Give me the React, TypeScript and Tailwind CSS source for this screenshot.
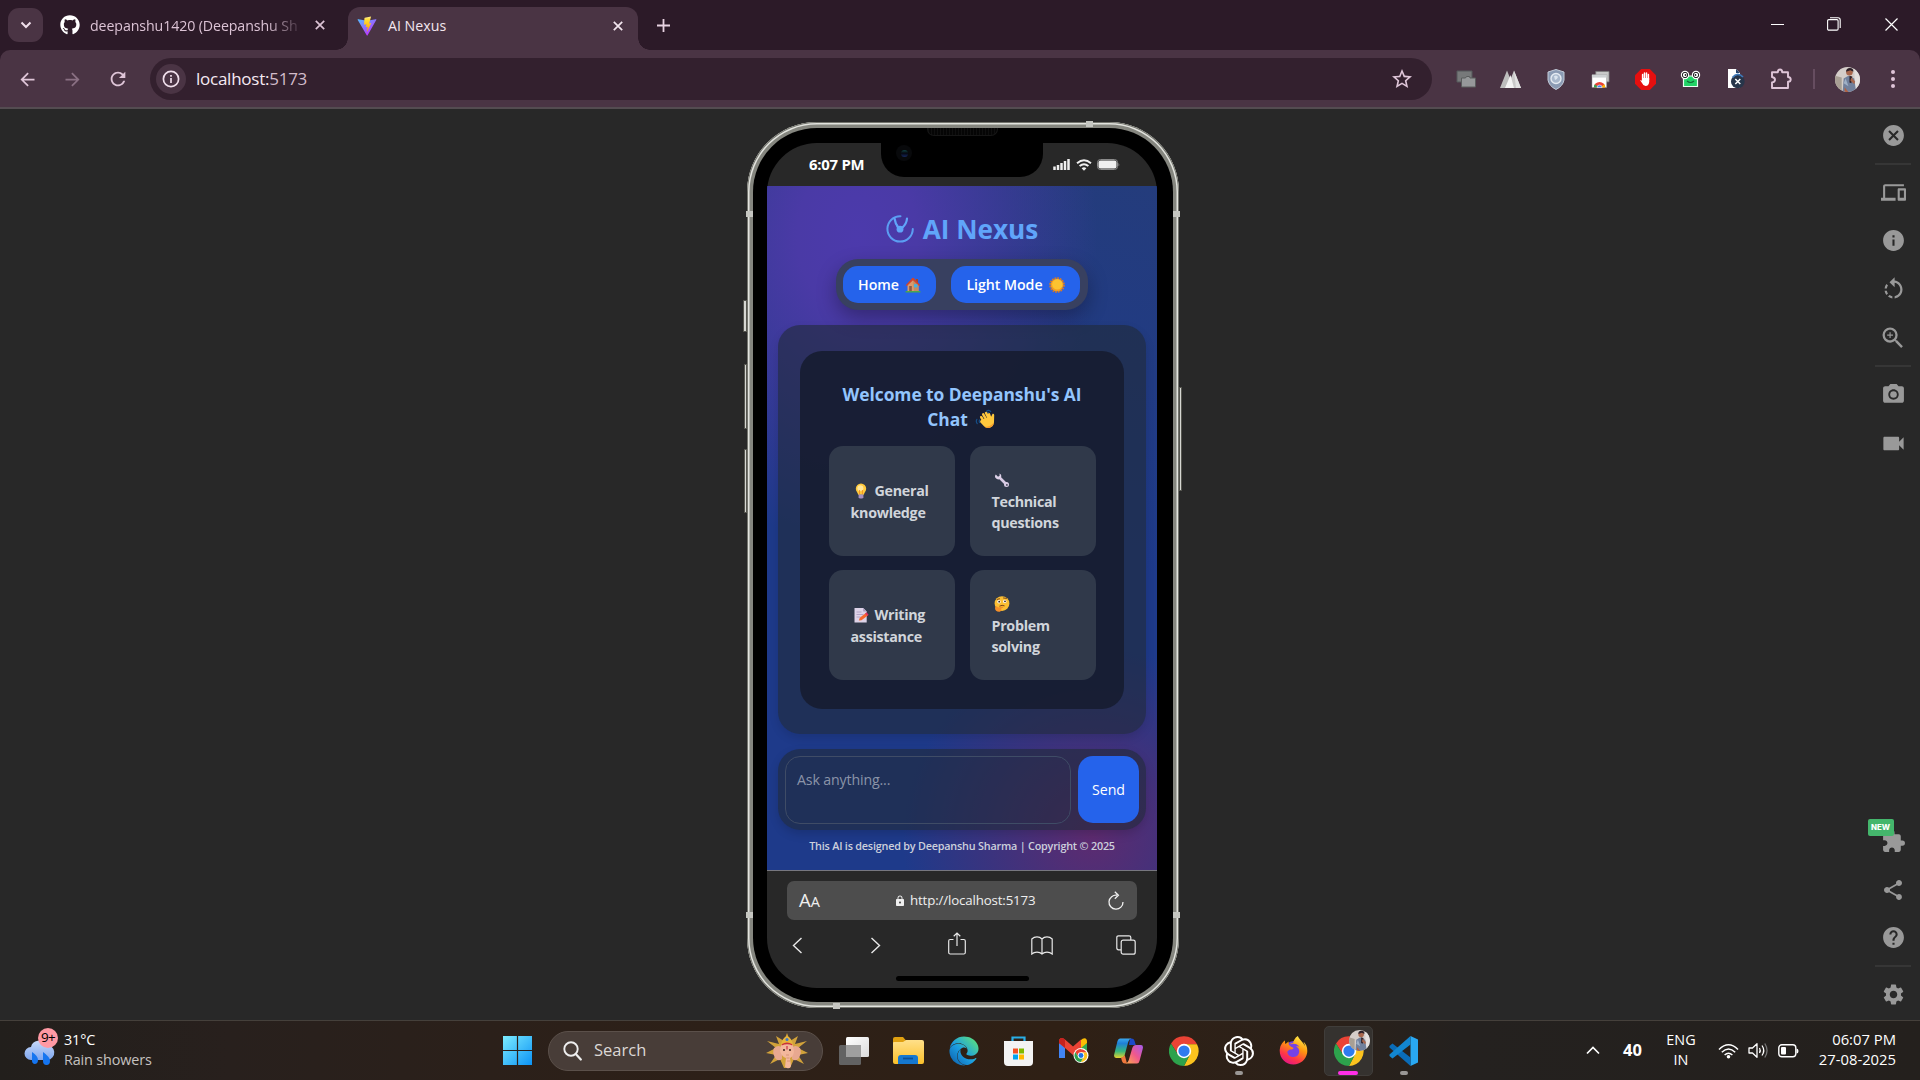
import React from "react";
import { FaGithub, FaEdge, FaFirefoxBrowser } from "react-icons/fa";
import { SiOpenai } from "react-icons/si";
import {
  MdCancel, MdDevices, MdInfo, MdRotateLeft, MdZoomIn, MdCameraAlt, MdVideocam,
  MdExtension, MdShare, MdHelp, MdSettings, MdStarBorder, MdRefresh, MdArrowBack, MdArrowForward, MdLock,
} from "react-icons/md";

type Kids = { children?: React.ReactNode };

const Svg = ({ w, h = w, vb, children, className = "" }: Kids & { w: number; h?: number; vb: string; className?: string }) => (
  <svg width={w} height={h} viewBox={vb} fill="none" className={"shrink-0 " + className}>{children}</svg>
);

/* ---------- Emoji drawings ---------- */
const House = () => (
  <Svg w={16} vb="0 0 16 16">
    <rect x="0.5" y="14" width="15" height="1.6" rx=".6" fill="#4ca64c" />
    <rect x="11" y="2" width="2" height="4" fill="#a5482c" />
    <path d="M2.5 7.5 8 2.2l5.5 5.3V14h-11z" fill="#d99a6c" />
    <path d="M8 2.2 13.5 7.5V14H9z" fill="#c58b62" />
    <path d="M.7 8.2 7.3 1q.7-.6 1.4 0l6.6 7.2-1.2.9L8 3.2 1.9 9.1z" fill="#d2452c" />
    <rect x="9" y="7.2" width="3.4" height="3.2" fill="#3fb4e8" />
    <rect x="4.2" y="9" width="2.6" height="5" fill="#8e5a44" />
  </Svg>
);
const Sun = () => (
  <Svg w={16} vb="0 0 16 16">
    <circle cx="8" cy="8" r="7" stroke="#e07a1d" strokeWidth="1.6" strokeDasharray="1.8 .95" />
    <circle cx="8" cy="8" r="6.3" fill="#f59e1e" />
    <circle cx="8.3" cy="7.4" r="5.2" fill="#fcc330" />
  </Svg>
);
const Wave = () => (
  <Svg w={20} vb="0 0 20 20">
    <path d="M11.5 2.2q2.3-1.6 4.2.4M1.8 10.4q-1.2 2.4.4 4.2M4.6 11q-.8 1.2 0 2.4M12 4l1.6-.3" stroke="#17508a" strokeWidth="1.2" strokeLinecap="round" />
    <path d="M6.2 8.2 9.6 14M8.2 5.4l3.6 6.2M11 4l3 6M14 5.4l1.6 4.8" stroke="#ffc83d" strokeWidth="2.5" strokeLinecap="round" />
    <path d="M7 10.6 16 8l1.6-3.2q1.4-.4 1.6 1.2l-.2 7.6q-.6 4.2-4.4 5.2-3.6.8-5.6-1.6L5 13q0-1.6 2-2.4z" fill="#ffc83d" />
    <path d="M9 17.2q5 1.6 8-1.6l1.8-2q-.6 4.2-4.2 5.2-3.4.8-5.6-1.6z" fill="#f79a2b" />
  </Svg>
);
const Bulb = () => (
  <Svg w={16} vb="0 0 16 16">
    <path d="M8 .6a5.2 5.2 0 0 1 5.2 5.2c0 2.6-2 3.6-2.4 6H5.2C4.800 9.400 2.800 8.400 2.800 5.800A5.200 5.200 0 0 1 8 .6z" fill="#ffc93c" />
    <circle cx="7.4" cy="5.200" r="3" fill="#ffe79a" />
    <path d="M6.600 7v4M9.400 7v4" stroke="#f08c1e" strokeWidth=".9" />
    <path d="M5.600 11.600h4.800v2.600L9.400 15.400H6.600l-1-1.200z" fill="#a58fc0" />
  </Svg>
);
const Wrench = () => (
  <Svg w={16} vb="0 0 16 16">
    <path d="m4.500 4.500 7.500 7.500" stroke="#d8cbe4" strokeWidth="2.600" />
    <path d="M1.800 2.400A3 3 0 1 0 5.400 1.500L5.800 3.900 4.300 5z" fill="#ddd1e8" />
    <circle cx="12.500" cy="12.500" r="2.500" fill="#d8cbe4" />
    <circle cx="12.900" cy="12.900" r=".9" fill="#3b3f52" />
  </Svg>
);
const Memo = () => (
  <Svg w={16} vb="0 0 16 16">
    <path d="M1.500 1h8.700l3.500 3.500V15.500H1.500z" fill="#ddd3e8" />
    <path d="M10.200 1l3.500 3.500h-3.500z" fill="#a99bc0" />
    <path d="M3.500 5h5M3.500 7.500h7M3.500 10h4" stroke="#b3a4c6" />
    <path d="m5.800 13.600 1-2.900 5.700-4.500 2.300 2.400-6.300 4.700z" fill="#f7682d" />
    <path d="m12 6.500 1.500-1.200 2.100 2.400-1.400 1.300z" fill="#e0325e" />
  </Svg>
);
const Thinking = () => (
  <Svg w={16} vb="0 0 16 16">
    <circle cx="8" cy="7.600" r="7.400" fill="#fcbf33" />
    <circle cx="5" cy="5.800" r="1.700" fill="#fff" /><circle cx="10.800" cy="5.400" r="1.700" fill="#fff" />
    <circle cx="5.200" cy="5.700" r=".9" fill="#35241b" /><circle cx="11" cy="5.300" r=".9" fill="#35241b" />
    <path d="M3.200 3.400 5.500 2.800M9.500 2l3 .4M5.800 10q2.400-1.400 4.400-.3" stroke="#6b3a17" strokeWidth=".9" strokeLinecap="round" />
    <path d="M1 12q.2-2 1.800-1.600l1.600 1.200 4-1.200q1.200.2.800 1.200L7 12.800q1 2.400-1.200 3Q1.200 16.200 1 12z" fill="#f5902a" />
  </Svg>
);

/* ---------- Brand drawings ---------- */
const Chrome = ({ size = 30 }: { size?: number }) => (
  <Svg w={size} vb="0 0 48 48">
    <path d="M24 13h20.800A24 24 0 0 0 3.200 12l11.300 17.500z" fill="#ea4335" />
    <path d="M33.500 29.500 24 48A24 24 0 0 0 44.800 13H24z" fill="#fcc31e" />
    <path d="M14.500 29.500 3.200 12A24 24 0 0 0 24 48l9.500-18.500z" fill="#2da24c" />
    <circle cx="24" cy="24" r="11.500" fill="#fff" />
    <circle cx="24" cy="24" r="9" fill="#2f7bee" />
  </Svg>
);
const Vite = () => (
  <Svg w={20} vb="0 0 32 32">
    <defs>
      <linearGradient id="vt" x1="0" y1="0" x2="20" y2="30" gradientUnits="userSpaceOnUse"><stop stopColor="#41d1ff" /><stop offset="1" stopColor="#bd34fe" /></linearGradient>
      <linearGradient id="vb" x1="16" y1="2" x2="18" y2="22" gradientUnits="userSpaceOnUse"><stop stopColor="#ffea83" /><stop offset=".2" stopColor="#ffdd35" /><stop offset="1" stopColor="#ffa800" /></linearGradient>
    </defs>
    <path d="M30.800 6.200 17 30.800q-.7 1.200-1.500 0L1.200 6.200q-.6-1.500 1-1.200l13.800 2.400L30 5q1.400-.2.800 1.200z" fill="url(#vt)" />
    <path d="M22.600 .8 12.400 2.800l-.5.600-.6 10.400 3.800-.7-1 5 3.200-.8-1.600 7.200q.1.700.6.200l6.500-13.400-3.400.6z" fill="url(#vb)" />
  </Svg>
);
const Avatar = ({ size }: { size: number }) => (
  <svg width={size} height={size} viewBox="0 0 26 26" className="shrink-0 rounded-full">
    <rect width="26" height="26" fill="#d4cdc9" />
    <path d="M0 9l7 2v15H0z" fill="#a89f94" />
    <path d="M20 0h6v26h-5z" fill="#e4e0df" />
    <path d="M9 12l5-3 6 3 2 14H8z" fill="#71809c" />
    <path d="M11 12l3 8-5-3z" fill="#9fb0c6" />
    <circle cx="15" cy="5.500" r="3.400" fill="#a8674d" />
    <path d="M11.500 5q0-4 4-4t3.500 4l-3-1.500z" fill="#2c2028" />
    <path d="M15 9l3 1-1 7-2-1z" fill="#33242b" />
    <path d="M17 11l4 4-1 3-4-4z" fill="#a8674d" />
    <path d="M10 21l4 5h-4z" fill="#b5603f" />
  </svg>
);

/* ---------- Browser chrome ---------- */
const XIcon = () => (
  <Svg w={10} vb="0 0 10 10"><path d="M.8.800l8.400 8.400M9.200.8.800 9.200" stroke="currentColor" strokeWidth="1.700" /></Svg>
);

function TabStrip() {
  return (
    <div className="flex h-[50px] shrink-0 items-start bg-[#2c1a28] pl-2">
      <div className="mt-2 flex h-[34px] w-[35px] items-center justify-center rounded-[11px] bg-[#4a3444] text-[#f0dfeb]">
        <Svg w={12} h={8} vb="0 0 12 8"><path d="m1.500 1.500 4.500 4.500 4.500-4.500" stroke="currentColor" strokeWidth="2" /></Svg>
      </div>
      <div className="flex h-[50px] w-[305px] items-center pl-[17px] text-[#dcc3d5]">
        <FaGithub size={20} className="text-white" />
        <div className="ml-[10px] mt-px w-[210px] whitespace-nowrap text-[14.200px] tracking-[-0.100px] [mask-image:linear-gradient(90deg,#000_84%,transparent_102%)]">deepanshu1420 (Deepanshu Sh</div>
        <div className="ml-[15px]"><XIcon /></div>
      </div>
      <div className="relative mt-[7px] flex h-[43px] w-[290px] items-center rounded-t-[12px] bg-[#4a3444] pb-[6px] pl-[9px] pr-[15px] text-[#f3e6ef]">
        <div className="absolute -left-3 bottom-0 size-3 bg-[radial-gradient(circle_at_0_0,transparent_11.500px,#4a3444_12px)]" />
        <div className="absolute -right-3 bottom-0 size-3 bg-[radial-gradient(circle_at_100%_0,transparent_11.500px,#4a3444_12px)]" />
        <Vite />
        <span className="ml-[11px] flex-1 text-[14.200px]">AI Nexus</span>
        <XIcon />
      </div>
      <div className="flex h-[50px] flex-1 items-center pl-[19px] text-[#e8d3e2]">
        <Svg w={13} vb="0 0 13 13"><path d="M6.500 0v13M0 6.500h13" stroke="currentColor" strokeWidth="1.800" /></Svg>
      </div>
      <div className="flex h-[48px] items-center pr-[22px] text-white">
        <Svg w={13} vb="0 0 13 13"><path d="M0 6.500h13" stroke="currentColor" /></Svg>
        <Svg w={14} vb="0 0 14 14" className="ml-[43px]"><rect x=".6" y="2.600" width="10.500" height="10.500" rx="1.200" stroke="currentColor" strokeWidth="1.100" /><path d="M3 .7h8q2.200 0 2.200 2.200V11" stroke="currentColor" strokeWidth="1.100" /></Svg>
        <Svg w={13} vb="0 0 13 13" className="ml-[44px]"><path d="m.5.500 12 12m0-12-12 12" stroke="currentColor" strokeWidth="1.200" /></Svg>
      </div>
    </div>
  );
}

const Ext = ({ children }: Kids) => <div className="flex w-[45px] items-center justify-center">{children}</div>;

function Toolbar() {
  return (
    <div className="shrink-0 bg-[#2c1a28]">
      <div className="flex h-[57px] items-center rounded-t-[10px] bg-[#4a3444] pt-px text-[#dfc5d8]">
        <div className="flex w-[150px] items-center pl-[17px]">
          <MdArrowBack size={21} />
          <MdArrowForward size={21} className="ml-6 text-[#8a7083]" />
          <MdRefresh size={22} className="ml-6" />
        </div>
        <div className="flex h-[42px] w-[1282px] items-center rounded-full bg-[#33202e] pl-[6px] pr-[18px]">
          <div className="flex size-[30px] items-center justify-center rounded-full bg-[#4a3444] text-[#f0dfeb]">
            <Svg w={18} vb="0 0 18 18"><circle cx="9" cy="9" r="7.600" stroke="currentColor" strokeWidth="1.700" /><path d="M9 8v5M9 5v1.800" stroke="currentColor" strokeWidth="1.700" /></Svg>
          </div>
          <div className="ml-[10px] flex-1 text-[17px] tracking-[-0.250px] text-[#f6eaf3]">localhost:<span className="text-[#d2bccb]">5173</span></div>
          <MdStarBorder size={24} />
        </div>
        <div className="ml-[11px] flex">
          <Ext><Svg w={20} vb="0 0 20 20"><path d="M1 2h15v11H1z" fill="#77797a" stroke="#55585a" /><path d="M5.500 9h4l1-1.500h3L14 9h5.500v9h-14z" fill="#96989a" stroke="#5a5c5d" /></Svg></Ext>
          <Ext><Svg w={21} h={20} vb="0 0 21 20"><path d="M7 1.500 0 19h14z" fill="#bdbdbd" /><path d="M14 1.500 21 19H7z" fill="#c9c9c9" /><path d="M10.500 6 14 19H5z" fill="#f4f4f4" /><path d="m14 1.500 2 17.500H21z" fill="#e2e2e2" /></Svg></Ext>
          <Ext><Svg w={18} h={21} vb="0 0 18 21"><path d="M9 .5 17 3v8q-1 6-8 9.500Q2 17 1 11V3z" fill="#8b9bb4" stroke="#c3ccd9" /><circle cx="9" cy="9.500" r="5" fill="#a9b8cc" stroke="#e5ebf2" strokeWidth="1.400" /><path d="M7 7q3-1.500 4 1-1 3-3 3" fill="#dbe4ee" /></Svg></Ext>
          <Ext><Svg w={19} h={19} vb="0 0 20 20"><path d="M5 1.500h14v11H5z" fill="#c8c8c8" stroke="#777" strokeWidth=".8" /><path d="M1 5h15.500v13.500H1z" fill="#fff" stroke="#777" strokeWidth=".5" /><path d="M1 5h15.500v3H1z" fill="#cfd2d4" /><path d="M3 18.500a6 6 0 0 1 12 0z" fill="#ea4335" /><path d="M3 18.500q0-2 1-3.500l4 3.500z" fill="#34a853" /><path d="M15 18.500q0-2-1-3.500l-4 3.500z" fill="#fbbc04" /><path d="M6.300 18.500a2.700 2.700 0 0 1 5.400 0z" fill="#4285f4" stroke="#fff" strokeWidth=".6" /></Svg></Ext>
          <Ext><Svg w={21} vb="0 0 21 21"><path d="M6.200 0h8.600L21 6.200v8.600L14.800 21H6.200L0 14.800V6.200z" fill="#e60f0f" /><path d="M7.600 11V5.500M9.500 10V4M11.500 10V4M13.400 11V5.500" stroke="#fff" strokeWidth="1.500" strokeLinecap="round" /><path d="M7 9h7.200v4q-.5 4-3.600 4-2.400 0-3.600-3L5.300 11.500q.5-1.200 1.700.5z" fill="#fff" /></Svg></Ext>
          <Ext><Svg w={21} h={20} vb="0 0 21 20"><path d="M3.500 7h14v10.500h-14z" fill="#21d366" stroke="#e9fff2" strokeWidth="1.200" /><circle cx="5" cy="6" r="4.200" fill="#fff" /><circle cx="16" cy="6" r="4.200" fill="#fff" /><circle cx="5" cy="6" r="2.700" stroke="#222" fill="#fff" /><circle cx="16" cy="6" r="2.700" stroke="#222" fill="#fff" /><circle cx="5.500" cy="6" r=".9" fill="#222" /><circle cx="15.500" cy="6" r=".9" fill="#222" /><path d="M7 12q3.500 3 7 0" stroke="#126b37" strokeWidth="1.200" /></Svg></Ext>
          <Ext><Svg w={19} h={20} vb="0 0 19 20"><path d="M2 0h8l4 4v15H2z" fill="#fff" /><path d="M10 0l4 4h-4z" fill="#25446d" /><circle cx="11.800" cy="12.500" r="6.800" fill="#27354a" /><path d="M6.500 8.500q5-6 10.500-.5" stroke="#3f78b8" strokeWidth="1.700" /><path d="m9.300 10 5 5m0-5-5 5" stroke="#fff" strokeWidth="1.500" /></Svg></Ext>
          <Ext><Svg w={22} h={22} vb="0 0 22 22"><path d="M2 4.200h5.800q0-2.700 2.200-2.700t2.200 2.700H18V9q2.700.2 2.700 2.400T18 13.800v6.200H2v-5.600q3-.5 3-2.700T2 9z" stroke="currentColor" strokeWidth="1.900" strokeLinejoin="round" /></Svg></Ext>
        </div>
        <div className="ml-[10px] h-5 w-[2px] bg-[#664d60]" />
        <div className="ml-[20px]"><Avatar size={25} /></div>
        <div className="ml-[31px] flex flex-col gap-[3px]">
          <i className="size-[4px] rounded-full bg-[#dfc5d8]" /><i className="size-[4px] rounded-full bg-[#dfc5d8]" /><i className="size-[4px] rounded-full bg-[#dfc5d8]" />
        </div>
      </div>
      <div className="h-[2px] bg-[#544c51]" />
    </div>
  );
}

/* ---------- Phone ---------- */
const NavBtn = ({ children, cls }: Kids & { cls: string }) => (
  <div className={"flex h-[37px] items-center justify-center gap-[6px] rounded-[15px] bg-[#2563eb] text-[14.200px] font-semibold tracking-[-0.050px] text-white " + cls}>{children}</div>
);
const Card = ({ icon, a, b, stacked }: { icon: React.ReactNode; a: string; b: string; stacked?: boolean }) => (
  <div className="flex h-[110px] flex-col justify-center rounded-[14px] bg-[#30394a] pl-[22px] pt-[2px] text-[14.300px] font-bold leading-[21.500px] tracking-[-0.300px] text-[#d1d5db]">
    {stacked ? (
      <><div className="flex h-[21.500px] items-center pl-[2px]">{icon}</div><div>{a}</div></>
    ) : (
      <div className="flex items-center gap-[6px] pl-[2px]">{icon}{a}</div>
    )}
    <div>{b}</div>
  </div>
);

function WebPage() {
  return (
    <div className="flex h-[684px] flex-col items-center bg-[#1e3a8a] bg-[radial-gradient(circle_190px_at_325px_650px,#5d2b70_0%,transparent_100%),radial-gradient(ellipse_240px_310px_at_90px_50px,#4c3aac_0%,#4a3aa6_25%,transparent_100%),linear-gradient(195deg,#243c7c_0%,#1e3a8a_50%)] bg-no-repeat">
      <div className="mt-[25px] flex h-[36px] items-center">
        <Svg w={28} vb="0 0 28 28">
          <path d="M14.500 1.200A12.700 12.700 0 1 0 26.800 14" stroke="#5b9df2" strokeWidth="2" strokeLinecap="round" />
          <path d="M8.500 3.500q.8 5 3.500 8.500M21 3.500q-.3 5-4.500 9" stroke="#60a5fa" strokeWidth="2.200" strokeLinecap="round" />
          <circle cx="14" cy="14.200" r="3.400" fill="#60a5fa" /><path d="m9.800 9.500 4.200 3 4-1.500-2 5h-4z" fill="#60a5fa" />
        </Svg>
        <span className="ml-[9px] text-[26.200px] font-bold leading-9 text-[#60a5fa]">AI Nexus</span>
      </div>
      <div className="mt-[12px] flex h-[51px] w-[252px] items-center justify-between rounded-[22px] bg-[#384060] pl-[7px] pr-[8px] shadow-[0_8px_20px_rgba(0,0,0,0.3)]">
        <NavBtn cls="w-[93px]">Home <House /></NavBtn>
        <NavBtn cls="w-[129px]">Light Mode <Sun /></NavBtn>
      </div>
      <div className="mt-[15px] flex h-[409px] w-[368px] items-center justify-center rounded-[22px] bg-[#1f2937]/60 shadow-[0_4px_10px_rgba(0,0,0,0.12)]">
        <div className="flex h-[358px] w-[324px] flex-col items-center rounded-[22px] bg-[#171e33]/95 pt-[31px]">
          <div className="text-center text-[17.400px] font-bold leading-[25px] tracking-[-0.050px] text-[#93c5fd]">
            <div>Welcome to Deepanshu's AI</div>
            <div className="flex items-center justify-center gap-[7px] pr-0.5">Chat <Wave /></div>
          </div>
          <div className="mt-[14px] grid grid-cols-[126px_126px] gap-x-[15px] gap-y-[14px]">
            <Card icon={<Bulb />} a="General" b="knowledge" />
            <Card icon={<Wrench />} a="Technical" b="questions" stacked />
            <Card icon={<Memo />} a="Writing" b="assistance" />
            <Card icon={<Thinking />} a="Problem" b="solving" stacked />
          </div>
        </div>
      </div>
      <div className="mt-[15px] flex h-[81px] w-[368px] items-center gap-[7px] rounded-[22px] bg-[#1f2937]/60 px-[7px] shadow-[0_4px_10px_rgba(0,0,0,0.15)]">
        <div className="h-[68px] w-[286px] rounded-[15px] border border-[#3f4c66] pl-[11px] pt-[11px] text-[14.200px] leading-[23px] tracking-[-0.150px] text-[#8b94a8]">Ask anything...</div>
        <div className="flex h-[67px] w-[61px] items-center justify-center rounded-[15px] bg-[#2563eb] text-[14.200px] text-white">Send</div>
      </div>
      <div className="mt-[7px] whitespace-nowrap text-[10.800px] font-semibold leading-[18px] tracking-[-0.200px] text-[#ccd0dc]">This AI is designed by Deepanshu Sharma | Copyright © 2025</div>
    </div>
  );
}

function Phone() {
  return (
    <div className="relative mt-[13px] h-[886px] w-[432px] rounded-[70px] bg-[#85867f] p-[6px] shadow-[inset_0_0_0_1px_#73746d,inset_0_0_0_2.500px_#e2e3de]">
      <div className="absolute -left-[4px] top-[178px] h-[32px] w-[4px] border border-[#55554f] bg-[#d6d7d2]" />
      <div className="absolute -left-[3px] top-[242px] h-[65px] w-[3px] border border-[#55554f] bg-[#d6d7d2]" />
      <div className="absolute -left-[3px] top-[327px] h-[64px] w-[3px] border border-[#55554f] bg-[#d6d7d2]" />
      <div className="absolute -right-[3px] top-[265px] h-[104px] w-[3px] border border-[#55554f] bg-[#d6d7d2]" />
      <div className="absolute left-[-1px] top-[89px] h-[6px] w-[7px] bg-[#c5c6c1]" />
      <div className="absolute right-[-1px] top-[89px] h-[6px] w-[7px] bg-[#c5c6c1]" />
      <div className="absolute left-[-1px] top-[790px] h-[6px] w-[7px] bg-[#c5c6c1]" />
      <div className="absolute right-[-1px] top-[790px] h-[6px] w-[7px] bg-[#c5c6c1]" />
      <div className="absolute right-[86px] top-[-1px] h-[6px] w-[7px] bg-[#c5c6c1]" />
      <div className="absolute bottom-[-1px] left-[86px] h-[6px] w-[7px] bg-[#c5c6c1]" />
      <div className="h-full rounded-[64px] bg-black pb-[14px] pl-[14px] pr-[16px] pt-[15px]">
        <div className="flex h-[845px] w-[390px] flex-col overflow-hidden rounded-[50px] bg-[#282828]">
          <div className="flex h-[43px] shrink-0 items-center pl-[42px] pr-[37px]">
            <span className="w-[72px] whitespace-nowrap text-[14.900px] font-bold tracking-[-0.250px] text-white">6:07 PM</span>
            <div className="flex h-[34px] w-[162px] items-start self-start rounded-b-[23px] bg-black">
              <div className="ml-[15px] mt-[2px] flex size-[16px] items-center justify-center rounded-full bg-[#08090b]"><div className="size-[7px] rounded-full bg-[linear-gradient(180deg,#124545,#05070e_45%,#16285f)]" /></div>
            </div>
            <div className="ml-auto flex items-center text-[#efefef]">
              <Svg w={17} h={11} vb="0 0 17 11"><path d="M1.500 11V7.500M5 11V6M8.500 11V4M12 11V2M15.500 11V0" stroke="currentColor" strokeWidth="2.500" /></Svg>
              <Svg w={16} h={12} vb="0 0 16 12" className="ml-[6px]"><path d="M1 4.200q7-6 14 0M3.600 7q4.400-3.700 8.800 0" stroke="currentColor" strokeWidth="1.900" /><path d="M5.600 9.200q2.400-2 4.800 0L8 11.800z" fill="currentColor" /></Svg>
              <Svg w={23} h={11} vb="0 0 23 11" className="ml-[5px]"><rect x=".5" y=".5" width="20" height="10" rx="3" stroke="#8b8b8b" /><rect x="1.500" y="1.500" width="18" height="8" rx="2" fill="currentColor" /><path d="M21.500 3.500q1.500 2 0 4z" fill="#8b8b8b" /></Svg>
            </div>
          </div>
          <WebPage />
          <div className="h-px shrink-0 bg-[#77777f]" />
          <div className="mx-auto mt-[10px] flex h-[39px] w-[350px] items-center rounded-[7px] bg-[#4d4d4d] pl-[12px] pr-[13px] text-[#efefef]">
            <span className="w-[95px] text-[18.500px] leading-none">A<span className="text-[14.500px]">A</span></span>
            <MdLock size={12} />
            <span className="ml-[4px] flex-1 pt-px text-[13.300px] tracking-[-0.150px]">http://localhost:5173</span>
            <Svg w={16} h={19} vb="0 0 16 19"><path d="M9 4.200A7 7 0 1 0 15 11M6.800.800l3.600 3.500-3.600 3.500" stroke="currentColor" strokeWidth="1.300" /></Svg>
          </div>
          <div className="flex h-[50px] items-center pl-[25px] text-[#e8e8e8]">
            <Svg w={11} h={17} vb="0 0 11 17"><path d="M9.500 1 1.500 8.500l8 7.500" stroke="currentColor" strokeWidth="1.400" /></Svg>
            <Svg w={11} h={17} vb="0 0 11 17" className="ml-[67px]"><path d="m1.500 1 8 7.500-8 7.500" stroke="currentColor" strokeWidth="1.400" /></Svg>
            <Svg w={18} h={23} vb="0 0 18 23" className="mb-1 ml-[67px]"><path d="M5.500 7.500H2.200q-1.500 0-1.500 1.500v11.500q0 1.500 1.500 1.500h13.600q1.500 0 1.500-1.500V9q0-1.500-1.500-1.500h-3.300M9 14V1.200M5.700 4.200 9 1l3.300 3.200" stroke="currentColor" strokeWidth="1.200" /></Svg>
            <Svg w={22} h={19} vb="0 0 22 19" className="ml-[65px]"><path d="M11 18V3Q9 .8 6 .8T.8 3v15q2-1.800 5.200-1.800T11 18q2-1.800 5-1.800t5.200 1.800V3Q19 .8 16 .8T11 3" stroke="currentColor" strokeWidth="1.200" /></Svg>
            <Svg w={20} vb="0 0 20 20" className="mb-px ml-[63px]"><rect x="5.200" y="5.200" width="14" height="14" rx="2" stroke="currentColor" strokeWidth="1.200" /><path d="M5 14.800H2.500q-1.700 0-1.700-1.700V2.500Q.8.800 2.500.8h10.600q1.700 0 1.700 1.700V5" stroke="currentColor" strokeWidth="1.200" /></Svg>
          </div>
          <div className="mx-auto mt-[6px] h-[5px] w-[133px] rounded-full bg-black" />
        </div>
      </div>
      <div className="absolute left-[180px] top-[6px] h-[8px] w-[71px] rounded-b-[7px] border border-t-0 border-[#161616] bg-[repeating-linear-gradient(90deg,#0f0f0f_0_1px,#050505_1px_3px)]" />
    </div>
  );
}

/* ---------- Right rail ---------- */
const Rail = ({ children, cls = "h-[48.500px]" }: Kids & { cls?: string }) => (
  <div className={"flex shrink-0 items-center justify-center " + cls}>{children}</div>
);
const Line = () => <div className="mx-auto h-[2px] w-[36px] shrink-0 bg-[#363636]" />;

function SideRail() {
  return (
    <div className="flex w-[54px] flex-col text-[#999]">
      <Rail cls="mb-px h-[53px]"><MdCancel size={25} /></Rail>
      <Line />
      <Rail cls="mt-[3px] h-[48px]"><MdDevices size={25} /></Rail>
      <Rail><MdInfo size={25} /></Rail>
      <Rail cls="h-[48.500px] pt-px"><MdRotateLeft size={27} /></Rail>
      <Rail cls="h-[48.500px] pt-[2px]"><MdZoomIn size={28} /></Rail>
      <div className="mt-[3px]"><Line /></div>
      <Rail cls="mt-[4px] h-[48px]"><MdCameraAlt size={25} /></Rail>
      <Rail cls="h-[48.500px] pt-px"><MdVideocam size={27} /></Rail>
      <div className="flex-1" />
      <Rail cls="h-[48px] pb-[2px]">
        <div className="relative"><MdExtension size={25} />
          <div className="absolute -left-[13px] -top-[10px] flex h-[17px] w-[26px] items-center justify-center rounded-[2px] bg-[#44b66c] font-[Inter] text-[7.800px] font-extrabold text-white">NEW</div>
        </div>
      </Rail>
      <Rail cls="h-[47px] pb-px"><MdShare size={24} /></Rail>
      <Rail><MdHelp size={25} /></Rail>
      <div className="mt-[3px]"><Line /></div>
      <Rail cls="mb-[1px] mt-[3px] h-[49px]"><MdSettings size={25} /></Rail>
    </div>
  );
}

/* ---------- Taskbar ---------- */
const Task = ({ children, dot }: Kids & { dot?: boolean }) => (
  <div className="relative flex h-[60px] w-[55px] shrink-0 items-center justify-center">
    {children}
    {dot && <div className="absolute bottom-[6px] left-[24px] h-[3.500px] w-[8px] rounded-full bg-[#9a9795]" />}
  </div>
);

function Taskbar() {
  return (
    <div className="flex h-[60px] shrink-0 items-center border-t border-[#45403b] bg-[linear-gradient(90deg,#221f1c_0%,#28201d_12%,#2c2019_30%,#2f2015_55%,#2c2119_68%,#24211f_76%,#24201d_100%)] text-white">
      <div className="relative ml-[24px] h-[40px] w-[40px] -translate-y-px">
        <Svg w={32} h={32} vb="0 0 32 32" className="mt-[7px]">
          <defs><linearGradient id="cl" x1="0" y1="0" x2="0" y2="1"><stop stopColor="#c7dafa" /><stop offset="1" stopColor="#7ea6ef" /></linearGradient></defs>
          <path d="M7 22a6.500 6.500 0 0 1 0-13 8 8 0 0 1 15-2 7.500 7.500 0 0 1 1.500 15z" fill="url(#cl)" transform="translate(0 1)" />
          <path d="M8 15q6 4 6 8t-3.500 4Q7.500 26.500 8 22zM19 15q7 5 7 9t-3.500 4-3.500-4z" fill="#1575f0" />
        </Svg>
        <div className="absolute left-[14px] top-[-2px] flex size-[20px] items-center justify-center rounded-full bg-[#ff99a4] text-[13.500px] tracking-[-0.800px] text-black">9+</div>
      </div>
      <div className="w-[439px] pb-px text-[14.400px] leading-[20px] tracking-[-0.150px]"><div>31°C</div><div className="text-[#c5c2c0]">Rain showers</div></div>
      <Svg w={29} vb="0 0 29 29">
        <defs><linearGradient id="win" x1="0" y1="0" x2="1" y2="1" ><stop stopColor="#7cecff" /><stop offset="1" stopColor="#0c93f5" /></linearGradient></defs>
        <path d="M0 0h29v29H0z" fill="url(#win)" /><path d="M14.500 0v29M0 14.500h29" stroke="#2c2019" strokeWidth="1.200" />
      </Svg>
      <div className="ml-[16px] flex h-[40px] w-[275px] items-center rounded-full border border-[#5b504a] bg-[#483d38] pl-[14px] pr-[14px]">
        <Svg w={19} h={20} vb="0 0 19 20"><circle cx="8" cy="8" r="6.700" stroke="#eee" strokeWidth="1.900" /><path d="m12.800 13 5 5.500" stroke="#eee" strokeWidth="2.200" strokeLinecap="round" /></Svg>
        <span className="ml-[12px] flex-1 text-[16.500px] text-[#dcd8d5]">Search</span>
        <Svg w={42} h={36} vb="0 0 42 36">
          <path d="M21 0 24 8 32 3 29 11 41 8 32 15 42 20 32 22 38 31 28 26 24 35H18L14 26 4 31 10 22 0 20 10 15 1 8 13 11 10 3 18 8z" fill="#d2a23a" />
          <path d="M8 15q5-4 8 0v11q-4 3-7-1-3-6-1-10zM34 15q-5-4-8 0v11q4 3 7-1 3-6 1-10z" fill="#e8a890" />
          <path d="M15 12q6-3 12 0l1 7q-1 5-4 6l1 8q-1 3-4 2l-2-1 1-9q-4-1-6-7z" fill="#f3b79c" />
          <path d="M15 12q1-7 6-9 5 2 6 9-6-3-12 0z" fill="#e8b53c" /><path d="M16 11q5-3 10 0l.4 1.500q-5-2.500-10.800 0z" fill="#c9303a" /><circle cx="21" cy="6.500" r="1.500" fill="#3d76c9" />
          <circle cx="18" cy="17" r="1" fill="#3b2018" /><circle cx="24" cy="17" r="1" fill="#3b2018" /><path d="M20.400 13h1.200v3.500h-1.200z" fill="#c9304a" /><path d="M20 22h3M20.500 25h3M21 28h3" stroke="#d08b70" strokeWidth=".8" />
        </Svg>
      </div>
      <div className="ml-[3px] flex">
        <Task><Svg w={30} h={28} vb="0 0 30 28"><defs><linearGradient id="tv" x1="0" y1="0" x2="1" y2="1"><stop stopColor="#fff" /><stop offset="1" stopColor="#dcdcdc" /></linearGradient></defs><rect y="8" width="22" height="20" rx="1.500" fill="#626262" /><rect x="7" width="23" height="20" rx="1.500" fill="url(#tv)" /><path d="M7 8h15v12H7z" fill="#9f9f9f" /></Svg></Task>
        <Task><Svg w={31} h={27} vb="0 0 31 27"><defs><linearGradient id="fd" x1="0" y1="0" x2="0" y2="1"><stop stopColor="#ffe08a" /><stop offset="1" stopColor="#fbc02a" /></linearGradient></defs><path d="M0 2q0-2 2-2h8l3 3.500V9H0z" fill="#e0a010" /><path d="M0 6q0-1 1-1h9l3-2h16q2 0 2 2v20q0 2-2 2H2q-2 0-2-2z" fill="url(#fd)" /><path d="M5 27v-6q0-3 3-3h14q3 0 3 3v6z" fill="#1578d0" /><path d="M10 21.500h10" stroke="#0b4f96" strokeWidth="1.800" /></Svg></Task>
        <Task><svg width="0" height="0" className="absolute"><defs><linearGradient id="ed" x1="0" y1="1" x2="1" y2="0"><stop stopColor="#0c59a4" /><stop offset=".45" stopColor="#1b9de2" /><stop offset="1" stopColor="#66eb6e" /></linearGradient><linearGradient id="ff" x1=".8" y1="0" x2=".3" y2="1"><stop stopColor="#fff44f" /><stop offset=".4" stopColor="#ff980e" /><stop offset=".75" stopColor="#ff3647" /><stop offset="1" stopColor="#e31587" /></linearGradient></defs></svg>
          <FaEdge size={30} fill="url(#ed)" className="shrink-0" /></Task>
        <Task><Svg w={29} h={30} vb="0 0 29 30"><path d="M8.500 6V1.500h12V6" stroke="#29aee6" strokeWidth="2.200" /><path d="M0 5h29v21q0 4-4 4H4q-4 0-4-4z" fill="#f3f3f3" /><path d="M9 12.500h5v5H9z" fill="#f25022" /><path d="M15 12.500h5v5h-5z" fill="#7fba00" /><path d="M9 18.500h5v5H9z" fill="#00a4ef" /><path d="M15 18.500h5v5h-5z" fill="#ffb900" /></Svg></Task>
        <Task><Svg w={30} h={27} vb="0 0 30 27"><path d="M0 6v15h6V9z" fill="#4285f4" /><path d="M28 6v15h-6V9z" fill="#34a853" /><path d="M22 3q1.500-1.800 3.500-1.800Q28 1.500 28 4.500V6l-6 5z" fill="#fbbc04" /><path d="M0 6V4.500Q0 1 3 1q1.500 0 3 1.500l8 7 8-7v8.500l-8 7-8-7z" fill="#ea4335" /><path d="M0 6V4.500Q0 1 3 1q1.500 0 3 1.500V11z" fill="#c5221f" /><circle cx="22" cy="18.500" r="7.500" fill="#fff" /><g transform="translate(15.500 12) scale(.27)"><path d="M24 13h20.800A24 24 0 0 0 3.200 12l11.300 17.500z" fill="#ea4335" /><path d="M33.500 29.500 24 48A24 24 0 0 0 44.800 13H24z" fill="#fcc31e" /><path d="M14.500 29.500 3.200 12A24 24 0 0 0 24 48l9.500-18.500z" fill="#2da24c" /><circle cx="24" cy="24" r="12" fill="#fff" /><circle cx="24" cy="24" r="9" fill="#1a73e8" /></g></Svg></Task>
        <Task><Svg w={29} h={26} vb="0 0 29 26"><defs><linearGradient id="c1" x1="0" y1="0" x2="0" y2="1"><stop stopColor="#3aa8ee" /><stop offset=".25" stopColor="#1f7fd8" /><stop offset=".65" stopColor="#35b67c" /><stop offset="1" stopColor="#e5d22e" /></linearGradient><linearGradient id="c2" x1="1" y1="0" x2="0" y2="1"><stop stopColor="#a45cf0" /><stop offset=".5" stopColor="#f0588c" /><stop offset="1" stopColor="#ffab4c" /></linearGradient></defs>
          <path d="M16 .5h1.500q2.300 0 3 2.300L21.800 7H15z" fill="#1c49c8" /><path d="M6 .5h11q-2 .7-2.800 3.500l-3.500 13q-1 3-3.700 3H2Q-.7 20 .3 16L3.500 3Q4.200.5 6 .5z" fill="url(#c1)" />
          <path d="M13 25.500h-2q-2.300 0-3-2.300L7 19.500q2.700 0 3.700-2.500z" fill="#f0783c" /><path d="M23 25.500H12q2-.7 2.800-3.500l3.500-12q1-3 3.700-3h5q2.700 0 1.700 4L25.500 23q-.7 2.500-2.500 2.500z" fill="url(#c2)" /></Svg></Task>
        <Task><Chrome /></Task>
        <Task dot><SiOpenai size={30} /></Task>
        <Task><div className="flex size-[20px] items-center justify-center rounded-full bg-[#7542e5]"><FaFirefoxBrowser size={29} fill="url(#ff)" className="shrink-0" /></div></Task>
        <Task>
          <div className="absolute inset-x-[3px] inset-y-[5px] rounded-[5px] border border-[#403d3a] bg-[#35322f]" />
          <div className="relative"><Chrome /><div className="absolute -right-[6px] -top-[6px] rounded-full"><Avatar size={21} /></div></div>
          <div className="absolute bottom-[6px] left-[17px] h-[4px] w-[20px] rounded-full bg-[#ff2fe6]" />
        </Task>
        <Task dot><Svg w={30} vb="0 0 30 30"><path d="M21.500 0 29 3.500v23L21.500 30z" fill="#29a8f2" /><path d="M21.500 30v-8.500L3.500 7.500.5 10v1.500z" fill="#0a6cb8" /><path d="M21.500 0v8.500L3.500 22.500.5 20v-1.500z" fill="#1286d0" /></Svg></Task>
      </div>
      <div className="flex flex-1 items-center justify-end pr-[24px]">
        <Svg w={14} h={9} vb="0 0 14 9"><path d="m1 7.500 6-6 6 6" stroke="#fff" strokeWidth="1.700" /></Svg>
        <span className="ml-[23px] w-[21px] text-[16.500px] font-bold">40</span>
        <div className="ml-[21px] w-[32px] pb-px text-center text-[14.400px] leading-[20px]">ENG<br />IN</div>
        <Svg w={21} h={16} vb="0 0 21 16" className="ml-[21px]"><path d="M1 6.500Q10.500-3 20 6.500M3.800 9.300q6.700-6.500 13.400 0M6.600 12q3.900-3.500 7.800 0" stroke="#fff" strokeWidth="1.500" /><circle cx="10.500" cy="13.700" r="1.800" fill="#fff" /></Svg>
        <Svg w={21} h={17} vb="0 0 21 17" className="ml-[9px]"><path d="M1 6h3.500L9 1.700v13.600L4.500 11H1z" stroke="#fff" strokeWidth="1.300" strokeLinejoin="round" /><path d="M11.500 6q1.500 2.500 0 5M14 3.500q3.500 5 0 10" stroke="#fff" strokeWidth="1.300" /><path d="M16.800 1.500q4.500 7 0 14" stroke="#777" strokeWidth="1.300" /></Svg>
        <Svg w={21} h={14} vb="0 0 21 14" className="ml-[9px]"><rect x=".8" y=".8" width="17" height="12" rx="3" stroke="#fff" strokeWidth="1.400" /><rect x="3" y="3" width="5" height="7.600" rx="1" fill="#fff" /><path d="M18.500 4.500q2 0 2 2.500t-2 2.500z" fill="#fff" /></Svg>
        <div className="ml-[9px] w-[88px] whitespace-nowrap pb-[3px] text-right text-[14.800px] leading-[20px]">06:07 PM<br />27-08-2025</div>
      </div>
    </div>
  );
}

export default function App() {
  return (
    <div className="flex h-[1080px] w-[1920px] flex-col overflow-hidden bg-[#282828] font-['Open_Sans','Noto_Sans',sans-serif]">
      <TabStrip />
      <Toolbar />
      <div className="flex min-h-0 flex-1">
        <div className="flex flex-1 items-start pl-[747px]"><Phone /></div>
        <SideRail />
      </div>
      <Taskbar />
    </div>
  );
}
